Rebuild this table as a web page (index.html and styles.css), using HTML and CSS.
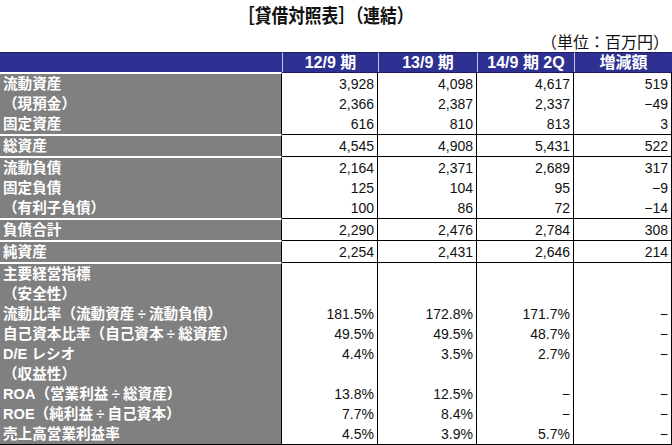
FILE: index.html
```html
<!DOCTYPE html>
<html lang="ja">
<head>
<meta charset="utf-8">
<link rel="stylesheet" href="styles.css">
</head>
<body>
<div class="title"><span class="title-text">［貸借対照表］（連結）</span></div>
<div class="unit">（単位：百万円）</div>
<table class="bs">
  <colgroup>
    <col class="c-label"><col class="c-a"><col class="c-b"><col class="c-c"><col class="c-d">
  </colgroup>
  <thead>
    <tr><th class="blank"></th><th>12/9 期</th><th>13/9 期</th><th>14/9 期 2Q</th><th>増減額</th></tr>
  </thead>
  <tbody>
    <tr class="first"><td class="label">流動資産</td><td>3,928</td><td>4,098</td><td>4,617</td><td>519</td></tr>
    <tr><td class="label">（現預金）</td><td>2,366</td><td>2,387</td><td>2,337</td><td>−49</td></tr>
    <tr><td class="label">固定資産</td><td>616</td><td>810</td><td>813</td><td>3</td></tr>
    <tr class="sep"><td class="label">総資産</td><td>4,545</td><td>4,908</td><td>5,431</td><td>522</td></tr>
    <tr class="sep"><td class="label">流動負債</td><td>2,164</td><td>2,371</td><td>2,689</td><td>317</td></tr>
    <tr><td class="label">固定負債</td><td>125</td><td>104</td><td>95</td><td>−9</td></tr>
    <tr><td class="label">（有利子負債）</td><td>100</td><td>86</td><td>72</td><td>−14</td></tr>
    <tr class="sep"><td class="label">負債合計</td><td>2,290</td><td>2,476</td><td>2,784</td><td>308</td></tr>
    <tr class="sep"><td class="label">純資産</td><td>2,254</td><td>2,431</td><td>2,646</td><td>214</td></tr>
    <tr class="sep"><td class="label">主要経営指標</td><td></td><td></td><td></td><td></td></tr>
    <tr><td class="label">（安全性）</td><td></td><td></td><td></td><td></td></tr>
    <tr><td class="label">流動比率（流動資産<span class="div">÷</span>流動負債）</td><td>181.5%</td><td>172.8%</td><td>171.7%</td><td>−</td></tr>
    <tr><td class="label">自己資本比率（自己資本<span class="div">÷</span>総資産）</td><td>49.5%</td><td>49.5%</td><td>48.7%</td><td>−</td></tr>
    <tr><td class="label">D/E レシオ</td><td>4.4%</td><td>3.5%</td><td>2.7%</td><td>−</td></tr>
    <tr><td class="label">（収益性）</td><td></td><td></td><td></td><td></td></tr>
    <tr><td class="label">ROA（営業利益<span class="div">÷</span>総資産）</td><td>13.8%</td><td>12.5%</td><td>−</td><td>−</td></tr>
    <tr><td class="label">ROE（純利益<span class="div">÷</span>自己資本）</td><td>7.7%</td><td>8.4%</td><td>−</td><td>−</td></tr>
    <tr class="last"><td class="label">売上高営業利益率</td><td>4.5%</td><td>3.9%</td><td>5.7%</td><td>−</td></tr>
  </tbody>
</table>
</body>
</html>
```
FILE: styles.css
```css
html, body {
  margin: 0;
  padding: 0;
  background: #fff;
}
body {
  width: 672px;
  font-family: "Liberation Sans", "Noto Sans CJK JP", sans-serif;
  color: #111;
}
.title {
  height: 30px;
  line-height: 30px;
  text-align: center;
  padding-right: 20px;
  font-family: "Noto Sans CJK JP", sans-serif;
  font-weight: 700;
  font-size: 19px;
  color: #111;
}
.title-text {
  display: inline-block;
  transform: scaleX(0.88);
}
.unit {
  height: 22px;
  line-height: 22px;
  text-align: right;
  padding-right: 3px;
  font-family: "Noto Sans CJK JP", sans-serif;
  font-size: 16px;
  color: #111;
}
.bs {
  width: 672px;
  table-layout: fixed;
  border-spacing: 0;
  border-collapse: separate;
}
.c-label { width: 282px; }
.c-a { width: 96px; }
.c-b { width: 99px; }
.c-c { width: 97px; }
.c-d { width: 98px; }

.bs th {
  background: #2e3192;
  color: #fff;
  font-family: "Liberation Sans", "Noto Sans CJK JP", sans-serif;
  font-weight: 700;
  font-size: 16px;
  height: 19px;
  line-height: 19px;
  padding: 0;
  text-align: center;
  border-top: 1px solid #1c1e60;
  border-left: 1px solid #c8c8e0;
}
.bs th.blank {
  border-left: 0;
}
.bs td {
  height: 20px;
  line-height: 20px;
  padding: 0 3px 0 0;
  font-size: 14px;
  text-align: right;
  border-right: 1px solid #000;
  white-space: nowrap;
  overflow: hidden;
}
.bs td.label {
  background: #808080;
  color: #fff;
  text-align: left;
  padding: 0 0 0 3px;
  font-weight: 700;
  font-size: 14.6px;
  font-family: "Liberation Sans", "Noto Sans CJK JP", sans-serif;
}
.bs td.label .div {
  display: inline-block;
  width: 14.6px;
  text-align: center;
}
.bs tr.first td { border-top: 1px solid #1c1e60; }
.bs tr.first td.label { border-top: 2px solid #fff; }
.bs tr.sep td { border-top: 1px solid #000; }
.bs tr.sep td.label { border-top: 2px solid #fff; }
.bs tr.last td { border-bottom: 1px solid #000; }
```
